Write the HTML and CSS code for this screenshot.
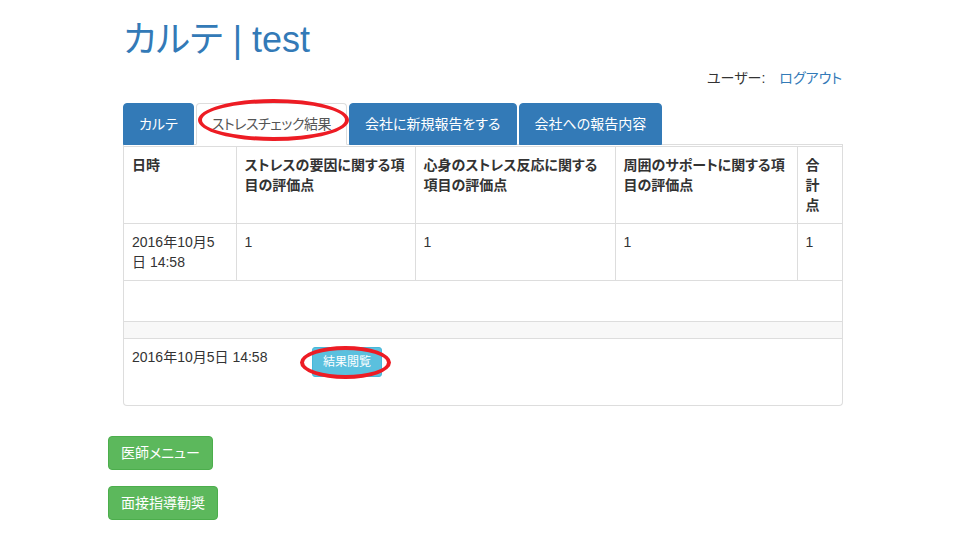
FILE: index.html
```html
<!DOCTYPE html>
<html lang="ja">
<head>
  <meta charset="UTF-8">
  <title>カルテ | test</title>
  <link rel="stylesheet" href="styles.css">
</head>
<body>

  <div class="container">
    <h1 class="page-title">カルテ | test</h1>
    <p class="user-bar">ユーザー: <a href="#" class="logout">ログアウト</a></p>

    <!-- Tabs -->
    <ul class="nav-tabs">
      <li><a href="#">カルテ</a></li>
      <li class="active"><a href="#">ストレスチェック結果</a><span class="mark mark-tab"></span></li>
      <li><a href="#">会社に新規報告をする</a></li>
      <li><a href="#">会社への報告内容</a></li>
    </ul>

    <!-- Tab Content -->
    <div class="tab-content">
      <table class="table table-bordered result-table">
        <colgroup>
          <col style="width: 112px">
          <col style="width: 179px">
          <col style="width: 200px">
          <col style="width: 182px">
          <col>
        </colgroup>
        <thead>
          <tr>
            <th>日時</th>
            <th>ストレスの要因に関する項<br>目の評価点</th>
            <th>心身のストレス反応に関する<br>項目の評価点</th>
            <th>周囲のサポートに関する項<br>目の評価点</th>
            <th>合<br>計<br>点</th>
          </tr>
        </thead>
        <tbody>
          <tr>
            <td>2016年10月5<br>日 14:58</td>
            <td>1</td>
            <td>1</td>
            <td>1</td>
            <td>1</td>
          </tr>
        </tbody>
      </table>

      <table class="table history-table">
        <thead>
          <tr>
            <th class="date-col"></th>
            <th></th>
          </tr>
        </thead>
        <tbody>
          <tr>
            <td>2016年10月5日 14:58</td>
            <td>
              <span class="btn-wrap">
                <a href="#" class="btn btn-info btn-sm">結果閲覧</a>
                <span class="mark mark-btn"></span>
              </span>
            </td>
          </tr>
        </tbody>
      </table>
    </div>

    <div class="actions">
      <div><a href="#" class="btn btn-success">医師メニュー</a></div>
      <div><a href="#" class="btn btn-success">面接指導勧奨</a></div>
    </div>
  </div>

</body>
</html>
```

FILE: styles.css
```css
body {
  margin: 0;
  font-family: 'Liberation Sans', 'Noto Sans CJK JP', sans-serif;
  font-feature-settings: "palt";
  font-size: 14px;
  line-height: 20px;
  color: #333;
  background-color: #fff;
}

a {
  color: #337ab7;
  text-decoration: none;
}

.container {
  width: 722px;
  margin: 0 auto;
}

/* Header */
.page-title {
  margin: 20px 0 8px;
  font-size: 36px;
  font-weight: normal;
  line-height: 1.1;
  color: #337ab7;
}

.user-bar {
  margin: 0 0 15px;
  padding-right: 3px;
  text-align: right;
}

.logout {
  margin-left: 10px;
}

/* Tabs */
.nav-tabs {
  display: flex;
  margin: 0 2px 0 0;
  padding: 0;
  list-style: none;
  border-bottom: 1px solid #ddd;
}

.nav-tabs li {
  position: relative;
  margin-right: 2px;
  margin-bottom: -1px;
}

.nav-tabs li a {
  display: block;
  padding: 10px 15px;
  border: 1px solid #337ab7;
  border-radius: 4px 4px 0 0;
  background-color: #337ab7;
  color: #fff;
}

.nav-tabs li.active a {
  background-color: #fff;
  color: #555;
  letter-spacing: -0.5px;
  border-color: #ddd #ddd transparent;
}

/* Annotation marks */
.mark {
  position: absolute;
  border: 4px solid #ed1c24;
  border-radius: 50%;
  pointer-events: none;
}

.mark-tab {
  left: 2px;
  right: -2px;
  top: -4px;
  bottom: 4px;
}

.btn-wrap {
  position: relative;
  display: inline-block;
}

.mark-btn {
  left: -12px;
  right: -9px;
  top: -1px;
  bottom: -2px;
}

/* Tab content */
.tab-content {
  margin-right: 2px;
  padding-top: 1px;
  border: 1px solid #ddd;
  border-top: none;
  border-radius: 0 0 4px 4px;
}

.table {
  width: 100%;
  border-collapse: collapse;
  border-spacing: 0;
  margin-bottom: 20px;
}

.table th,
.table td {
  padding: 8px;
  text-align: left;
  vertical-align: top;
}

.result-table {
  table-layout: fixed;
  margin-bottom: 40px;
}

.table-bordered th,
.table-bordered td {
  border: 1px solid #ddd;
}

.table-bordered tr > :first-child {
  border-left: none;
}

.table-bordered tr > :last-child {
  border-right: none;
}

.result-table th {
  font-weight: bold;
}

.history-table th {
  background-color: #f8f8f8;
  border-top: 1px solid #ddd;
  border-bottom: 1px solid #ddd;
}

.history-table .date-col {
  width: 164px;
}

/* Buttons */
.btn {
  display: inline-block;
  padding: 6px 12px;
  font-size: 14px;
  line-height: 20px;
  border: 1px solid transparent;
  border-radius: 4px;
  color: #fff;
  white-space: nowrap;
}

.btn-sm {
  padding: 5px 10px;
  font-size: 12px;
  line-height: 18px;
  border-radius: 3px;
}

.btn-info {
  background-color: #5bc0de;
  border-color: #46b8da;
}

.btn-success {
  background-color: #5cb85c;
  border-color: #4cae4c;
}

.actions {
  margin: 30px 0 0 -15px;
}

.actions div {
  margin-bottom: 16px;
}
```
